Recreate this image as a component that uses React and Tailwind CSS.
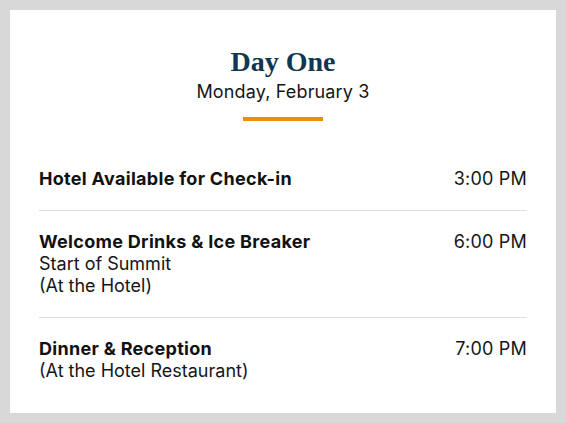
export default function App() {
  const rows = [
    { title: "Hotel Available for Check-in", lines: [], time: "3:00 PM" },
    { title: "Welcome Drinks & Ice Breaker", lines: ["Start of Summit", "(At the Hotel)"], time: "6:00 PM" },
    { title: "Dinner & Reception", lines: ["(At the Hotel Restaurant)"], time: "7:00 PM" },
  ];
  return (
    <div className="w-[566px] h-[423px] bg-[#d8d8d8] p-[10px]" style={{ fontFamily: "Inter, sans-serif" }}>
      <div className="h-full bg-white px-[29px] pt-[35px] text-[#161616]">
        <div className="flex flex-col items-center">
          <h1 className="text-[28px] leading-[34px] font-bold text-[#0f3750]" style={{ fontFamily: "'Liberation Serif', serif" }}>Day One</h1>
          <div className="text-[18px] leading-[22px] mt-[2px] tracking-[0.15px]">Monday, February 3</div>
          <div className="w-[80px] h-[4px] bg-[#f58a07] mt-[14px]" />
        </div>
        <div className="mt-[27px]">
          {rows.map((r, i) => (
            <div key={i} className={"flex justify-between py-5 text-[18px] leading-[22px] " + (i < rows.length - 1 ? "border-b border-[#dddddd]" : "")}>
              <div>
                <div className="font-bold tracking-[0.3px] text-[#111111]">{r.title}</div>
                {r.lines.map((l, j) => (
                  <div key={j}>{l}</div>
                ))}
              </div>
              <div className="tracking-[0.2px]">{r.time}</div>
            </div>
          ))}
        </div>
      </div>
    </div>
  );
}
